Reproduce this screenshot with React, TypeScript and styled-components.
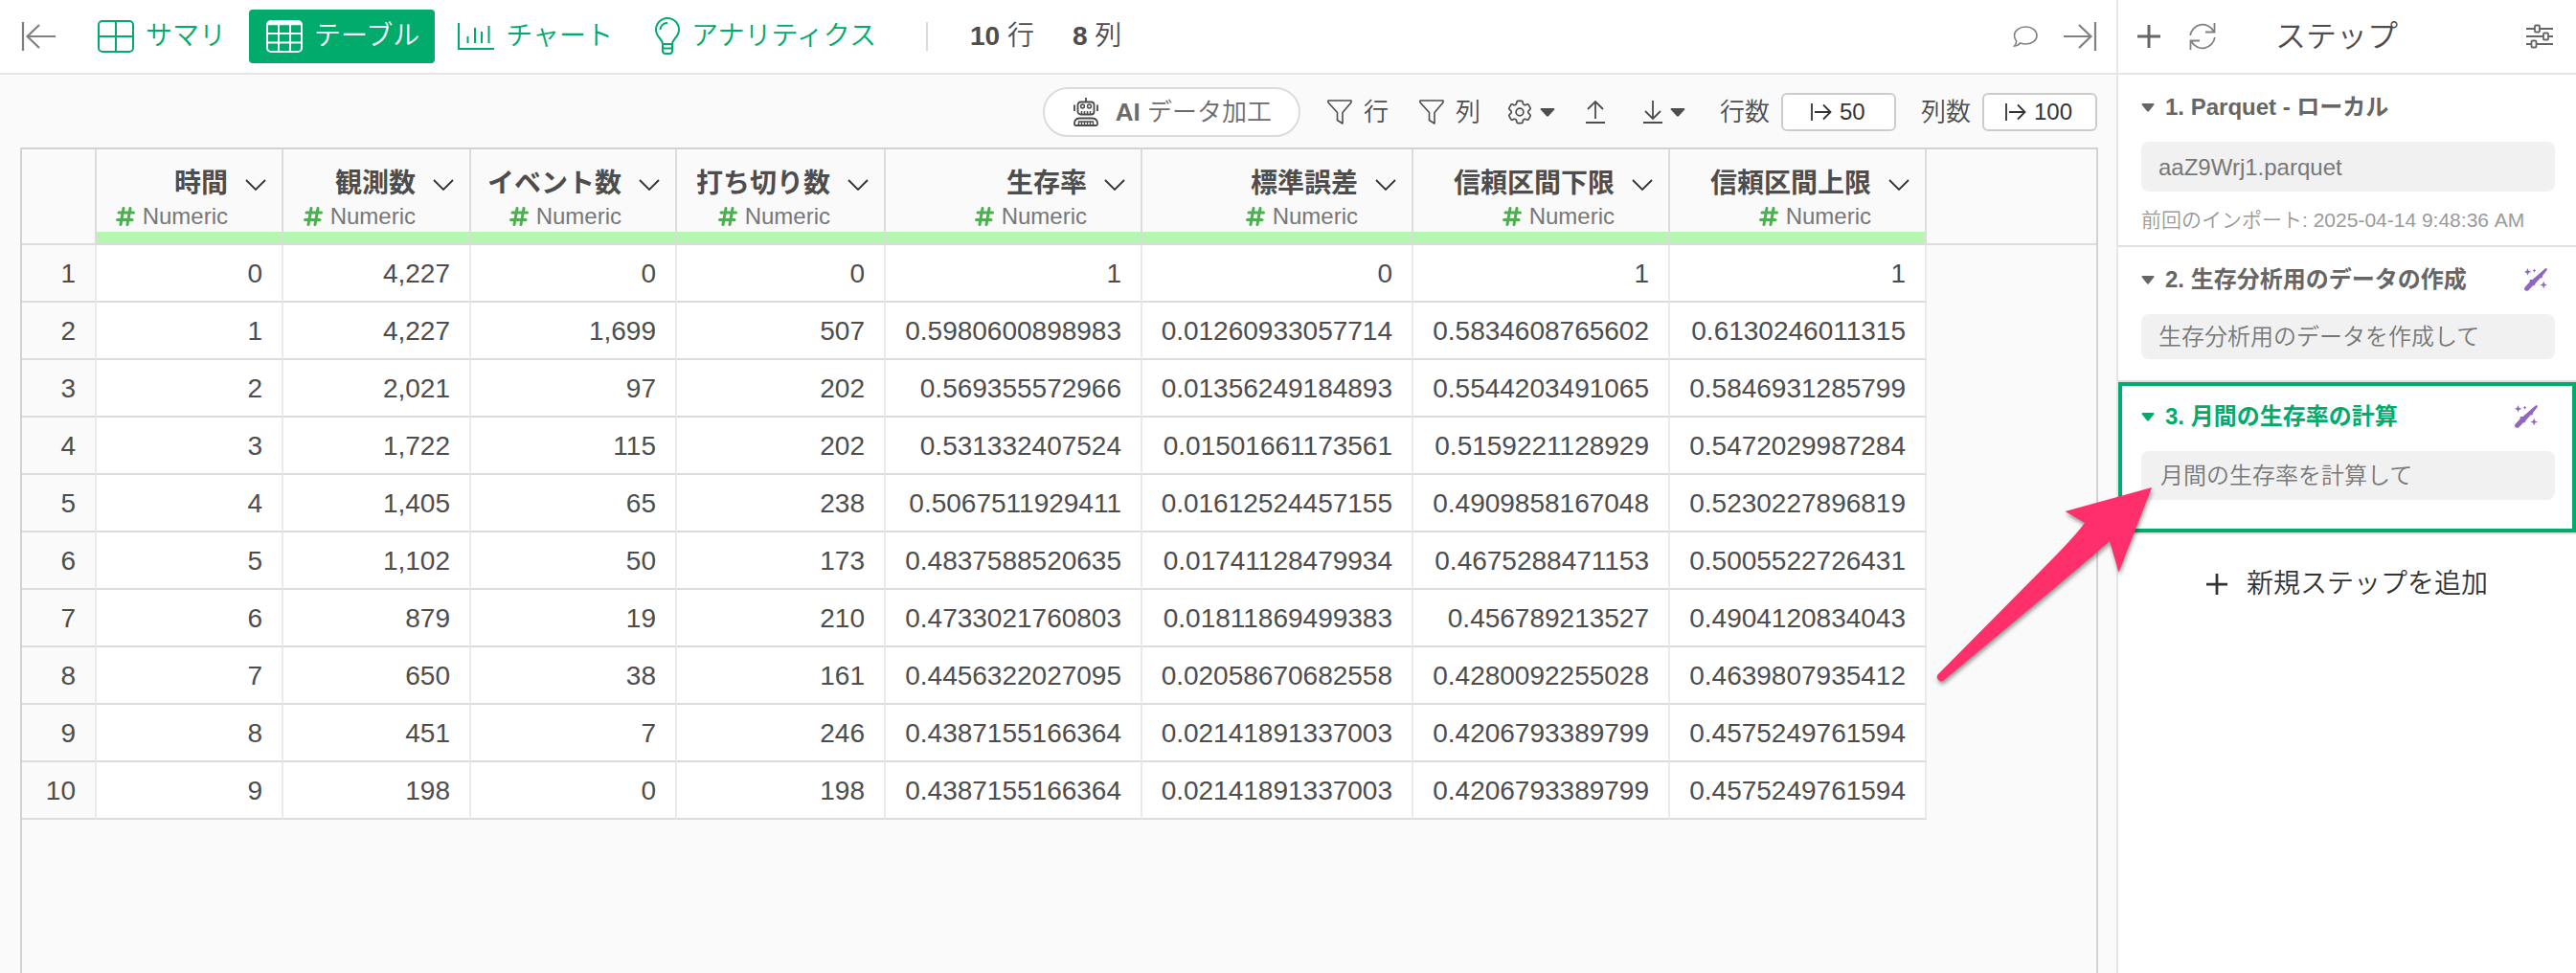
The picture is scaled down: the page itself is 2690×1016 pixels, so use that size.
import React from 'react';
import styled, { createGlobalStyle } from 'styled-components';
import { HiOutlineCog6Tooth } from 'react-icons/hi2';

const green = '#00ab6c';
const ink = '#4d4d4d';
const muted = '#777777';
const line = '#dcdcdc';

const GlobalStyle = createGlobalStyle`
  * { box-sizing: border-box; }
  body {
    margin: 0;
    background: #fafafa;
    color: ${ink};
    font-family: "Liberation Sans", "Noto Sans CJK JP", sans-serif;
    font-size: 28px;
    font-weight: 350;
    line-height: 36px;
  }
  button, input { font: inherit; color: inherit; }
  b { font-weight: 700; }
  button { border: 0; padding: 0; margin: 0; background: none; cursor: pointer; }
  svg { display: block; flex: none; }
`;

const Page = styled.div`
  position: relative;
  display: flex;
  min-height: 100vh;
`;

const Main = styled.main`
  flex: 1;
  min-width: 0;
  display: flex;
  flex-direction: column;
`;

const TopBar = styled.header`
  display: flex;
  align-items: center;
  height: 78px;
  padding: 0 20px 0 22px;
  background: #fff;
  border-bottom: 2px solid #e6e6e6;
`;

const IconButton = styled.button<{ $color?: string }>`
  display: flex;
  align-items: center;
  color: ${(p) => p.$color || '#808080'};
`;

const Tabs = styled.nav`
  display: flex;
  align-items: center;
  gap: 8px;
  margin-left: 28px;
`;

const Tab = styled.button<{ $active?: boolean }>`
  display: flex;
  align-items: center;
  gap: 12px;
  height: 56px;
  padding: ${(p) => (p.$active ? '0 16px 0 18px' : '0 16px')};
  border-radius: 4px;
  background: ${(p) => (p.$active ? green : 'transparent')};
  color: ${(p) => (p.$active ? '#fff' : green)};
`;

const Rule = styled.span`
  width: 2px;
  height: 30px;
  margin: 0 44px 0 36px;
  background: ${line};
`;

const Counts = styled.div`
  display: flex;
  gap: 40px;
  flex: 1;
  white-space: nowrap;
`;

const TopActions = styled.div`
  display: flex;
  align-items: center;
  gap: 26px;
`;

const Toolbar = styled.div`
  display: flex;
  align-items: center;
  justify-content: flex-end;
  height: 78px;
  padding: 0 20px 0 22px;
  font-size: 26px;
  white-space: nowrap;
`;

const AiButton = styled.button`
  display: flex;
  align-items: center;
  gap: 18px;
  height: 52px;
  padding: 0 28px 0 30px;
  border: 2px solid ${line};
  border-radius: 26px;
  background: #fff;
  color: #6b6b6b;
  svg { color: #4a4a4a; }
`;

const ToolButton = styled.button<{ $before: number; $gap?: number }>`
  display: flex;
  align-items: center;
  gap: ${(p) => p.$gap ?? 12}px;
  margin-left: ${(p) => p.$before}px;
`;

const Limit = styled.label<{ $before: number }>`
  display: flex;
  align-items: center;
  gap: 12px;
  margin-left: ${(p) => p.$before}px;
`;

const LimitBox = styled.span`
  display: flex;
  align-items: center;
  justify-content: center;
  gap: 8px;
  width: 120px;
  height: 40px;
  border: 2px solid #cccccc;
  border-radius: 6px;
  background: #fff;
  color: #333;
`;

const LimitInput = styled.input<{ $digits: number }>`
  width: ${(p) => p.$digits * 14}px;
  height: 32px;
  padding: 0;
  border: 0;
  outline: 0;
  background: transparent;
  font-size: 24px;
`;

const Grid = styled.section`
  flex: 1;
  margin: -2px 19px 0 21px;
  border: 2px solid #d2d2d2;
  border-bottom: 0;
`;

const Table = styled.table`
  width: 100%;
  table-layout: fixed;
  border-collapse: separate;
  border-spacing: 0;
`;

const Col = styled.col<{ $width?: number }>`
  width: ${(p) => (p.$width ? `${p.$width}px` : 'auto')};
`;

const HeadCell = styled.th<{ $last?: boolean }>`
  height: 100px;
  padding: 0;
  vertical-align: top;
  font-weight: 400;
  border-bottom: 2px solid ${line};
  border-right: ${(p) => (p.$last ? '0' : `2px solid ${line}`)};
`;

const HeadInner = styled.div`
  height: 98px;
  padding-top: 18px;
  border-bottom: 12px solid #b5f7b0;
`;

const HeadTitle = styled.button`
  display: flex;
  align-items: center;
  justify-content: flex-end;
  gap: 18px;
  width: 100%;
  padding-right: 16px;
  font-weight: 700;
  white-space: nowrap;
  svg { margin-top: 2px; color: #333; }
`;

const HeadType = styled.div`
  display: flex;
  align-items: center;
  justify-content: flex-end;
  gap: 8px;
  margin-top: 2px;
  padding-right: 56px;
  font-size: 24px;
  line-height: 28px;
  color: ${muted};
  svg { color: #4caf50; }
`;

const RowHead = styled.th`
  height: 60px;
  padding: 2px 20px 0 0;
  text-align: right;
  font-weight: 400;
  border-bottom: 2px solid ${line};
  border-right: 2px solid #ebebeb;
`;

const Cell = styled.td`
  height: 60px;
  padding: 2px 20px 0 0;
  text-align: right;
  background: #fff;
  border-bottom: 2px solid ${line};
  border-right: 2px solid #ebebeb;
`;

const Side = styled.aside`
  width: 480px;
  flex: none;
  background: #fff;
  border-left: 2px solid #e6e6e6;
`;

const SideBar = styled.header`
  display: flex;
  align-items: center;
  height: 78px;
  padding: 0 24px 0 20px;
  border-bottom: 2px solid #e6e6e6;
`;

const SideTitle = styled.h2`
  flex: 1;
  margin: 0 0 0 34px;
  padding-left: 28px;
  font-size: 32px;
  line-height: 40px;
  font-weight: inherit;
`;

const SideActions = styled.div`
  display: flex;
  align-items: center;
  gap: 30px;
`;

const Step = styled.section<{ $active?: boolean }>`
  padding: ${(p) => (p.$active ? '14px 18px 30px 20px' : '16px 22px 22px 24px')};
  border: ${(p) => (p.$active ? `4px solid ${green}` : '0')};
  color: ${(p) => (p.$active ? green : '#666666')};
`;

const StepSlot = styled.div`
  border-bottom: 2px solid #e0e0e0;
`;

const StepHead = styled.div<{ $active?: boolean }>`
  display: flex;
  align-items: center;
  justify-content: space-between;
  padding-right: ${(p) => (p.$active ? 18 : 8)}px;
  margin-bottom: 18px;
`;

const StepTitle = styled.button`
  display: flex;
  align-items: center;
  gap: 11px;
  font-size: 24px;
  line-height: 36px;
  font-weight: 700;
  white-space: nowrap;
`;

const StepCard = styled.div`
  padding: 8px 18px;
  border-radius: 8px;
  background: #f1f1f1;
  color: ${muted};
  font-size: 24px;
  line-height: 31px;
`;

const TallCard = styled(StepCard)`
  padding: 10px 20px;
`;

const FileCard = styled(StepCard)`
  padding: 11px 18px 10px;
`;

const StepNote = styled.p`
  margin: 18px 0 -8px;
  font-size: 21px;
  line-height: 24px;
  color: #9a9a9a;
`;

const AddStep = styled.button`
  display: flex;
  align-items: center;
  gap: 20px;
  margin: 34px auto 0;
  color: #333;
  white-space: nowrap;
`;

const Pointer = styled.svg`
  position: absolute;
  top: 500px;
  right: 440px;
  filter: drop-shadow(1px 3px 2px rgba(0, 0, 0, 0.4));
  pointer-events: none;
`;

const CollapseIcon = ({ flip }: { flip?: boolean }) => (
  <svg width="36" height="30" viewBox="0 0 36 30" fill="none" stroke="currentColor" strokeWidth="2.2">
    {flip ? <path d="M34 0V30M1 15H30M17 3L29.5 15L17 27" /> : <path d="M2 0V30M6 15H36M19 3L6.500 15L19 27" />}
  </svg>
);

const SummaryIcon = () => (
  <svg width="38" height="34" viewBox="0 0 38 34" fill="none" stroke="currentColor" strokeWidth="2">
    <rect x="1" y="1" width="36" height="32" rx="4" />
    <path d="M19 1V33M1 17H37" />
  </svg>
);

const TableIcon = () => (
  <svg width="38" height="34" viewBox="0 0 38 34" fill="none" stroke="currentColor" strokeWidth="2">
    <rect x="1" y="1" width="36" height="32" rx="4" />
    <path d="M13 3V33M25 3V33M1 14H37M1 23.500H37" />
    <path d="M2 3.200H36" strokeWidth="4" />
  </svg>
);

const ChartIcon = () => (
  <svg width="38" height="28" viewBox="0 0 38 28" fill="none" stroke="currentColor" strokeWidth="2">
    <path d="M1 0V27H38M10.500 14V21M18 5V21M25 9V21M32.500 3V21" />
  </svg>
);

const BulbIcon = () => (
  <svg width="30" height="40" viewBox="0 0 30 40" fill="none" stroke="currentColor" strokeWidth="2">
    <path d="M12 28C12 22.500 5 21 5 13A12 12 0 0 1 29 13C29 21 22 22.500 22 28Z" />
    <path d="M12 32.500H22M12 28V35Q12 38 15 38H19Q22 38 22 35V28M9.500 13A7 7 0 0 1 17 6" />
  </svg>
);

const CommentIcon = () => (
  <svg width="26" height="22" viewBox="0 0 26 22" fill="none" stroke="currentColor" strokeWidth="1.600">
    <path d="M13.500 1C20 1 25 5 25 10S20 19 13.500 19C11.500 19 9.500 18.600 7.500 18C6 20 3.500 21 1.500 21C3 19.500 3.800 17.500 3.500 15.500C2.300 14 1.500 12 1.500 10C1.500 5 7 1 13.500 1Z" />
  </svg>
);

const PlusIcon = ({ size, weight }: { size: number; weight: number }) => (
  <svg width={size} height={size} viewBox="0 0 24 24" fill="none" stroke="currentColor" strokeWidth={weight}>
    <path d="M12 0V24M0 12H24" />
  </svg>
);

const RefreshIcon = () => (
  <svg width="28" height="28" viewBox="0 0 28 28" fill="none" stroke="currentColor" strokeWidth="1.800">
    <path d="M1.200 13A13 13 0 0 1 25.500 8.500M26.500 0V9.500H17M26.800 15A13 13 0 0 1 2.500 19.500M1.500 28V18.500H11" />
  </svg>
);

const SlidersIcon = () => (
  <svg width="28" height="26" viewBox="0 0 28 26" fill="none" stroke="currentColor" strokeWidth="1.800">
    <path d="M0 5H9M14 5H28M0 13H18M23 13H28M0 21H5.500M10.500 21H28" />
    <rect x="9" y="1.500" width="5" height="7" rx="1" />
    <rect x="18" y="9.500" width="5" height="7" rx="1" />
    <rect x="5.500" y="17.500" width="5" height="7" rx="1" />
  </svg>
);

const RobotIcon = () => (
  <svg width="26" height="30" viewBox="0 0 26 30" fill="none" stroke="currentColor" strokeWidth="1.800">
    <path d="M13 0V4M1 7.500V14M25 7.500V14" />
    <rect x="4.500" y="4.500" width="17" height="13" rx="3" />
    <circle cx="9.500" cy="9" r="1.900" strokeWidth="1.500" />
    <circle cx="16.500" cy="9" r="1.900" strokeWidth="1.500" />
    <path d="M8.500 14V17M11.500 14V17M14.500 14V17M17.500 14V17" strokeWidth="1.500" />
    <path d="M6 21.500H20Q25 22 25 27V27.500Q25 29 23.500 29H2.500Q1 29 1 27.500V27Q1 22 6 21.500Z" />
    <path d="M5.500 28V25H20.500V28M8.500 25V28M11.500 25V28M14.500 25V28M17.500 25V28" strokeWidth="1.400" />
  </svg>
);

const FunnelIcon = () => (
  <svg width="26" height="26" viewBox="0 0 26 26" fill="none" stroke="currentColor" strokeWidth="1.600" strokeLinejoin="round">
    <path d="M1 1H25V3L16 13.500V25L10.500 21.500V13.500L1 3Z" />
  </svg>
);

const CaretIcon = ({ width = 16 }: { width?: number }) => (
  <svg width={width} height="9" viewBox="0 0 16 9" fill="currentColor" preserveAspectRatio="none">
    <path d="M1.500 0H14.500Q16 0.500 15.200 1.600L9 8.300Q8 9.200 7 8.300L0.800 1.600Q0 0.500 1.500 0Z" />
  </svg>
);

const UploadIcon = () => (
  <svg width="20" height="24" viewBox="0 0 20 24" fill="none" stroke="currentColor" strokeWidth="1.800">
    <path d="M0 23H20M10 19V1M2 9L10 1L18 9" />
  </svg>
);

const DownloadIcon = () => (
  <svg width="20" height="24" viewBox="0 0 20 24" fill="none" stroke="currentColor" strokeWidth="1.800">
    <path d="M0 23H20M10 0V19M2 11L10 19L18 11" />
  </svg>
);

const LimitIcon = () => (
  <svg width="22" height="18" viewBox="0 0 22 18" fill="none" stroke="currentColor" strokeWidth="1.800">
    <path d="M1 0V18M4 9H20.500M13 1.500L20.500 9L13 16.500" />
  </svg>
);

const ChevronIcon = () => (
  <svg width="22" height="12" viewBox="0 0 22 12" fill="none" stroke="currentColor" strokeWidth="1.800">
    <path d="M1 1L11 11L21 1" />
  </svg>
);

const HashIcon = () => (
  <svg width="20" height="20" viewBox="0 0 20 20" fill="none" stroke="currentColor" strokeWidth="3" strokeLinecap="round">
    <path d="M3 6H18.500M1.500 13.500H17M8 1.500L5 18.500M15 1.500L12 18.500" />
  </svg>
);

const WandIcon = () => (
  <svg width="24" height="24" viewBox="0 0 24 24" fill="#9166bf">
    <path d="M0.500 20L5.500 14.500L5.800 12L8.500 12L22 0.300Q24.500 -0.300 23.700 2L19 8L18.800 10L16.500 10.500L11.500 16L11 18L9 18.200L4 23.500Q1.500 24.500 0.300 22.700Q-0.300 21 0.500 20Z" />
    <path d="M3.500 0L4.600 2.700L7.300 3.800L4.600 4.900L3.500 7.600L2.400 4.900L0 3.800L2.400 2.700Z" />
    <path d="M10.500 0.500L11.100 2L12.600 2.600L11.100 3.200L10.500 4.700L9.900 3.200L8.400 2.600L9.900 2Z" />
    <path d="M20.200 13.700L21.300 16.400L24 17.500L21.300 18.600L20.200 21.300L19.100 18.600L16.400 17.500L19.100 16.400Z" />
  </svg>
);

const columns = [
  { name: '時間', width: 195 },
  { name: '観測数', width: 196 },
  { name: 'イベント数', width: 215 },
  { name: '打ち切り数', width: 218 },
  { name: '生存率', width: 268 },
  { name: '標準誤差', width: 283 },
  { name: '信頼区間下限', width: 268 },
  { name: '信頼区間上限', width: 268 },
];

const rows = [
  ['0', '4,227', '0', '0', '1', '0', '1', '1'],
  ['1', '4,227', '1,699', '507', '0.5980600898983', '0.01260933057714', '0.5834608765602', '0.6130246011315'],
  ['2', '2,021', '97', '202', '0.569355572966', '0.01356249184893', '0.5544203491065', '0.5846931285799'],
  ['3', '1,722', '115', '202', '0.531332407524', '0.01501661173561', '0.5159221128929', '0.5472029987284'],
  ['4', '1,405', '65', '238', '0.5067511929411', '0.01612524457155', '0.4909858167048', '0.5230227896819'],
  ['5', '1,102', '50', '173', '0.4837588520635', '0.01741128479934', '0.4675288471153', '0.5005522726431'],
  ['6', '879', '19', '210', '0.4733021760803', '0.01811869499383', '0.456789213527', '0.4904120834043'],
  ['7', '650', '38', '161', '0.4456322027095', '0.02058670682558', '0.4280092255028', '0.4639807935412'],
  ['8', '451', '7', '246', '0.4387155166364', '0.02141891337003', '0.4206793389799', '0.4575249761594'],
  ['9', '198', '0', '198', '0.4387155166364', '0.02141891337003', '0.4206793389799', '0.4575249761594'],
];

export default function App() {
  return (
    <Page>
      <GlobalStyle />
      <Main>
        <TopBar>
          <IconButton aria-label="左パネルを閉じる"><CollapseIcon /></IconButton>
          <Tabs>
            <Tab><SummaryIcon />サマリ</Tab>
            <Tab $active><TableIcon />テーブル</Tab>
            <Tab><ChartIcon />チャート</Tab>
            <Tab><BulbIcon />アナリティクス</Tab>
          </Tabs>
          <Rule />
          <Counts>
            <span><b>10</b> 行</span>
            <span><b>8</b> 列</span>
          </Counts>
          <TopActions>
            <IconButton aria-label="コメント"><CommentIcon /></IconButton>
            <IconButton aria-label="右パネルを閉じる"><CollapseIcon flip /></IconButton>
          </TopActions>
        </TopBar>

        <Toolbar>
          <AiButton><RobotIcon /><span><b>AI</b> データ加工</span></AiButton>
          <ToolButton $before={28}><FunnelIcon />行</ToolButton>
          <ToolButton $before={32}><FunnelIcon />列</ToolButton>
          <ToolButton $before={28} $gap={8} aria-label="設定">
            <HiOutlineCog6Tooth width={26} height={26} size={26} viewBox="2 2 20 20" strokeWidth={1.3} />
            <CaretIcon />
          </ToolButton>
          <ToolButton $before={32} aria-label="アップロード"><UploadIcon /></ToolButton>
          <ToolButton $before={40} $gap={8} aria-label="ダウンロード"><DownloadIcon /><CaretIcon /></ToolButton>
          <Limit $before={36}>
            行数
            <LimitBox><LimitIcon /><LimitInput $digits={2} defaultValue="50" /></LimitBox>
          </Limit>
          <Limit $before={26}>
            列数
            <LimitBox><LimitIcon /><LimitInput $digits={3} defaultValue="100" /></LimitBox>
          </Limit>
        </Toolbar>

        <Grid>
          <Table>
            <colgroup>
              <Col $width={78} />
              {columns.map((c) => <Col key={c.name} $width={c.width} />)}
              <Col />
            </colgroup>
            <thead>
              <tr>
                <HeadCell />
                {columns.map((c) => (
                  <HeadCell key={c.name} scope="col">
                    <HeadInner>
                      <HeadTitle>{c.name}<ChevronIcon /></HeadTitle>
                      <HeadType><HashIcon />Numeric</HeadType>
                    </HeadInner>
                  </HeadCell>
                ))}
                <HeadCell $last />
              </tr>
            </thead>
            <tbody>
              {rows.map((r, i) => (
                <tr key={i}>
                  <RowHead scope="row">{i + 1}</RowHead>
                  {r.map((v, j) => <Cell key={j}>{v}</Cell>)}
                  <td />
                </tr>
              ))}
            </tbody>
          </Table>
        </Grid>
      </Main>

      <Side>
        <SideBar>
          <SideActions>
            <IconButton $color="#666" aria-label="追加"><PlusIcon size={24} weight={3} /></IconButton>
            <IconButton aria-label="更新"><RefreshIcon /></IconButton>
          </SideActions>
          <SideTitle>ステップ</SideTitle>
          <IconButton $color="#666" aria-label="表示設定"><SlidersIcon /></IconButton>
        </SideBar>

        <StepSlot>
          <Step>
            <StepHead><StepTitle><CaretIcon width={14} />1. Parquet - ローカル</StepTitle></StepHead>
            <FileCard>aaZ9Wrj1.parquet</FileCard>
            <StepNote>前回のインポート: 2025-04-14 9:48:36 AM</StepNote>
          </Step>
        </StepSlot>
        <StepSlot>
          <Step>
            <StepHead>
              <StepTitle><CaretIcon width={14} />2. 生存分析用のデータの作成</StepTitle>
              <WandIcon />
            </StepHead>
            <StepCard>生存分析用のデータを作成して</StepCard>
          </Step>
        </StepSlot>
        <StepSlot>
          <Step $active>
            <StepHead $active>
              <StepTitle><CaretIcon width={14} />3. 月間の生存率の計算</StepTitle>
              <WandIcon />
            </StepHead>
            <TallCard>月間の生存率を計算して</TallCard>
          </Step>
        </StepSlot>
        <AddStep><PlusIcon size={22} weight={3} />新規ステップを追加</AddStep>
      </Side>

      <Pointer width="240" height="220" viewBox="10 10 240 220">
        <path
          fill="#ff2f6c"
          d="M247 19L156.500 44L177 56Q166 71 133 104L23.500 214.500A4.500 4.500 0 0 0 29 221L130 137Q172 102 203 75L212.500 107.500Z"
        />
      </Pointer>
    </Page>
  );
}
